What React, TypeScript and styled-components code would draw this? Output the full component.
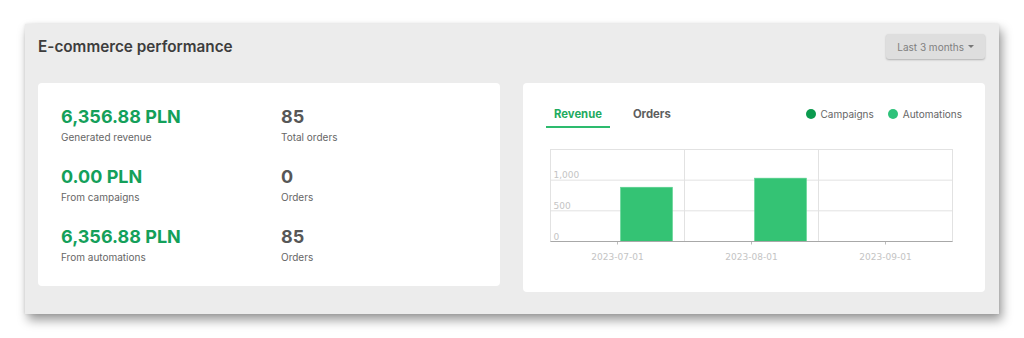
import styled, { createGlobalStyle } from "styled-components";

const GlobalStyle = createGlobalStyle`
    body {
        margin: 0;
        background: #ffffff;
        font-family: Inter, "Noto Sans", sans-serif;
    }
`;

const Page = styled.div`
    padding: 24px 0 30px 25px;
`;

const Panel = styled.section`
    width: 974px;
    height: 290px;
    box-sizing: border-box;
    background: #ececec;
    padding: 10px 14px 0 13px;
    box-shadow: 3px 6px 10px rgba(0, 0, 0, 0.4), 0 0 3px rgba(0, 0, 0, 0.1);
`;

const Header = styled.div`
    display: flex;
    justify-content: space-between;
    align-items: center;
    height: 25px;
`;

const Title = styled.h2`
    margin: 0;
    font-size: 15.3px;
    font-weight: 600;
    color: #3d3d3d;
`;

const RangeButton = styled.button`
    display: flex;
    align-items: center;
    gap: 4px;
    height: 25px;
    padding: 0 11px;
    border: none;
    border-radius: 3px;
    background: #dedede;
    box-shadow: 0 1px 2px rgba(0, 0, 0, 0.25);
    font-family: inherit;
    font-size: 10px;
    color: #808080;
`;

const Caret = styled.span`
    width: 0;
    height: 0;
    border-left: 3px solid transparent;
    border-right: 3px solid transparent;
    border-top: 3px solid #777;
`;

const Cards = styled.div`
    display: flex;
    gap: 23px;
    align-items: flex-start;
    margin-top: 24px;
`;

const Card = styled.div<{ $height: number }>`
    width: 462px;
    height: ${(p) => p.$height}px;
    box-sizing: border-box;
    background: #fff;
    border-radius: 4px;
`;

const StatsGrid = styled.div`
    display: grid;
    grid-template-columns: 220px 1fr;
    grid-auto-rows: 60px;
    padding: 24px 23px 0;
`;

const Stat = styled.div``;

const StatValue = styled.div<{ $green?: boolean }>`
    font-size: 18px;
    font-weight: 700;
    line-height: 20px;
    color: ${(p) => (p.$green ? "#14a05a" : "#575757")};
`;

const StatLabel = styled.div`
    margin-top: 4px;
    font-size: 10px;
    color: #666;
`;

const ChartCard = styled(Card)`
    padding: 20px 23px 0 23px;
`;

const ChartTop = styled.div`
    display: flex;
    justify-content: space-between;
    align-items: flex-start;
`;

const Tabs = styled.div`
    display: flex;
    gap: 15px;
`;

const Tab = styled.div<{ $active?: boolean }>`
    padding: 4px 8px 5px;
    font-size: 11.3px;
    font-weight: 700;
    color: ${(p) => (p.$active ? "#1fab5f" : "#5e5e5e")};
    border-bottom: 2px solid ${(p) => (p.$active ? "#2dbb6e" : "transparent")};
`;

const Legend = styled.div`
    display: flex;
    gap: 14px;
    padding-top: 5px;
`;

const LegendItem = styled.div`
    display: flex;
    align-items: center;
    gap: 5px;
    font-size: 10px;
    color: #666;
`;

const Dot = styled.span<{ $color: string }>`
    width: 10px;
    height: 10px;
    border-radius: 50%;
    background: ${(p) => p.$color};
`;

const ChartBox = styled.div`
    margin: 21px 0 0 4px;
`;

const stats = [
    { value: "6,356.88 PLN", label: "Generated revenue", count: "85", countLabel: "Total orders" },
    { value: "0.00 PLN", label: "From campaigns", count: "0", countLabel: "Orders" },
    { value: "6,356.88 PLN", label: "From automations", count: "85", countLabel: "Orders" },
];

const months = [
    { label: "2023-07-01", value: 885 },
    { label: "2023-08-01", value: 1033 },
    { label: "2023-09-01", value: 0 },
];

function RevenueChart() {
    const w = 402;
    const h = 92;
    const col = w / 3;
    const y = (v: number) => h - (v / 1500) * h;
    return (
        <svg width={410} height={118} style={{ display: "block", overflow: "visible" }}>
            <g transform="translate(0.5,0.5)" fontFamily="'DejaVu Sans', Verdana, sans-serif" fontSize="9" fill="#c4c4c4">
                <rect x={0} y={0} width={w} height={h} fill="none" stroke="#e2e2e2" />
                {[1, 2].map((i) => (
                    <line key={i} x1={col * i} y1={0} x2={col * i} y2={h} stroke="#e2e2e2" />
                ))}
                {[500, 1000].map((v) => (
                    <line key={v} x1={0} y1={y(v)} x2={w} y2={y(v)} stroke="#e2e2e2" />
                ))}
                {months.map((m, i) => (
                    <g key={m.label}>
                        {m.value > 0 && (
                            <rect x={col * i + 70} y={y(m.value)} width={52} height={h - y(m.value)} fill="#34c374" stroke="#5fd493" strokeWidth={0.6} />
                        )}
                        <line x1={col * i + col / 2} y1={h} x2={col * i + col / 2} y2={h + 3} stroke="#bdbdbd" />
                        <text x={col * i + col / 2} y={h + 18} textAnchor="middle">{m.label}</text>
                    </g>
                ))}
                <line x1={0} y1={h} x2={w} y2={h} stroke="#a8a8a8" />
                <text x={3} y={y(1000) - 2}>1,000</text>
                <text x={3} y={y(500) - 2}>500</text>
                <text x={3} y={h - 2}>0</text>
            </g>
        </svg>
    );
}

export default function App() {
    return (
        <Page>
            <GlobalStyle />
            <Panel>
                <Header>
                    <Title>E-commerce performance</Title>
                    <RangeButton>
                        Last 3 months <Caret />
                    </RangeButton>
                </Header>
                <Cards>
                    <Card $height={203}>
                        <StatsGrid>
                            {stats.map((s, i) => (
                                <>
                                    <Stat key={"v" + i}>
                                        <StatValue $green>{s.value}</StatValue>
                                        <StatLabel>{s.label}</StatLabel>
                                    </Stat>
                                    <Stat key={"c" + i}>
                                        <StatValue>{s.count}</StatValue>
                                        <StatLabel>{s.countLabel}</StatLabel>
                                    </Stat>
                                </>
                            ))}
                        </StatsGrid>
                    </Card>
                    <ChartCard $height={209}>
                        <ChartTop>
                            <Tabs>
                                <Tab $active>Revenue</Tab>
                                <Tab>Orders</Tab>
                            </Tabs>
                            <Legend>
                                <LegendItem><Dot $color="#0b9a4e" />Campaigns</LegendItem>
                                <LegendItem><Dot $color="#2ec27a" />Automations</LegendItem>
                            </Legend>
                        </ChartTop>
                        <ChartBox>
                            <RevenueChart />
                        </ChartBox>
                    </ChartCard>
                </Cards>
            </Panel>
        </Page>
    );
}
